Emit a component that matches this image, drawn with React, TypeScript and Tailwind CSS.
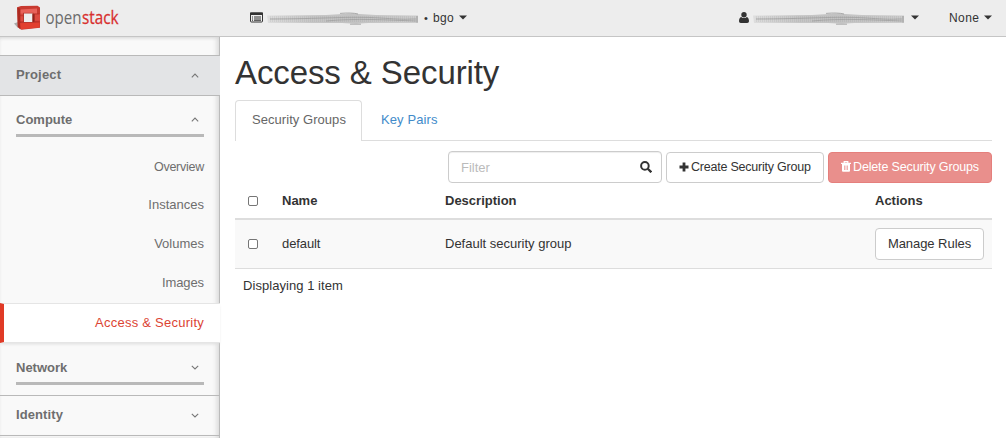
import React from "react";

function Caret({ className = "" }: { className?: string }) {
  return (
    <svg width="8" height="5" viewBox="0 0 8 5" className={className} fill="#333">
      <path d="M0 .4h8L4 4.6z" />
    </svg>
  );
}

function Chevron({ up = false }: { up?: boolean }) {
  return (
    <svg width="8" height="5" viewBox="0 0 8 5" fill="none" stroke="#777" strokeWidth="1.1">
      <path d={up ? "M.8 4.3 4 1.1l3.2 3.2" : "M.8.8 4 4 7.2.8"} />
    </svg>
  );
}

function Logo() {
  return (
    <svg width="112" height="33" viewBox="0 0 112 33">
      <path d="M0 23.500l4-1.500v6z" fill="#999" opacity=".8" />
      <path d="M3.200 7.200 7 6l16.500-.200L26 7.500v20.300L7.500 29.800 3.800 27z" fill="#c83a30" />
      <path d="M3.200 7.200 6.500 9v20.500L3.800 27z" fill="#ad2a20" />
      <path d="M6.500 9.500 23 8.500v5.300H6.500z" fill="#e8625a" />
      <path d="M6.500 14.200H9v7.300H6.500zM21 14h5v6.800h-5z" fill="#dc4a40" />
      <path d="M6 23.300 25.500 22v5.500L7 29.300z" fill="#e2402f" />
      <path d="M9 12.800h10.500v10H9z" fill="#b5382f" />
      <path d="M10 13.500h8.500v8.500H10z" fill="#eeeeee" />
      <path d="M18.500 14h1.900v8h-1.900z" fill="#8c241c" />
      <path d="M4 15.600l5.500.200M4 22.200l5.500-.200M19 14h6.500M19 22h6.500" stroke="#b02c22" strokeWidth=".7" />
      <text x="31.5" y="23.5" fontFamily="Open Sans, sans-serif" fontSize="19" textLength="36" lengthAdjust="spacingAndGlyphs" fill="#6c6c6c">open</text>
      <text x="68" y="23.5" fontFamily="Open Sans, sans-serif" fontSize="19" textLength="36.5" lengthAdjust="spacingAndGlyphs" fill="#d8302f" stroke="#d8302f" strokeWidth=".3">stack</text>
    </svg>
  );
}

function Smear({ id }: { id: string }) {
  return (
    <svg width="155" height="16" viewBox="0 0 155 16">
      <defs>
        <linearGradient id={id} x1="0" x2="1">
          <stop offset="0" stopColor="#dedede" />
          <stop offset=".3" stopColor="#c6c6c6" />
          <stop offset=".55" stopColor="#c2c2c2" />
          <stop offset="1" stopColor="#cdcdcd" />
        </linearGradient>
        <pattern id={id + "p"} width="2" height="8" patternUnits="userSpaceOnUse">
          <path d="M0 0h1v8H0z" fill="#888" opacity=".14" />
        </pattern>
        <filter id={id + "b"} x="-5%" y="-30%" width="110%" height="160%">
          <feGaussianBlur stdDeviation=".7" />
        </filter>
      </defs>
      <g filter={`url(#${id}b)`}>
        <path d="M1 5.500 60 5 85 3.500l25 1.500 42 .5V13H102l-12 .8-14-.8H2z" fill={`url(#${id})`} />
        <path d="M4 9c50 0 80-3 110-1s25 1 36 1M60 11c30-3 60-1 90 0" stroke="#aaa" strokeWidth="1" fill="none" />
        <path d="M74 3.400q12-1 18 .6M84 14.200h11" stroke="#999" strokeWidth=".8" fill="none" />
        <path d="M151 6v6.500" stroke="#999" strokeWidth="1" />
      </g>
      <path d="M3 6h146v6H3z" fill={`url(#${id}p)`} />
    </svg>
  );
}

function Header() {
  return (
    <header className="flex h-[37px] shrink-0 border-b border-[#c5c5c5] bg-[#ededed] text-[12px] leading-[35px]">
      <div className="w-[250px] pl-[14px]">
        <Logo />
      </div>
      <div className="flex h-[35px] w-[489px] items-center">
        <svg width="13" height="11" viewBox="0 0 13 10" className="shrink-0">
          <rect x=".5" y=".5" width="12" height="9" rx=".8" fill="#eee" stroke="#333" />
          <path d="M0 0h13v2.5H0z" fill="#333" />
          <path d="M2 4h1v1H2zm2 0h7v1H4zM2 6h1v.9H2zm2 0h7v.9H4zM2 7.8h1v.7H2zm2 0h7v.7H4z" fill="#333" />
        </svg>
        <span className="ml-[3px] flex w-[155px]"><Smear id="sa" /></span>
        <span className="ml-[3px] w-[6px] pt-[2px] text-[11px]">•</span>
        <span className="ml-[3px] w-[22px] pt-[2px] tracking-[.3px]">bgo</span>
        <Caret className="ml-[4px]" />
      </div>
      <div className="flex h-[35px] flex-1 items-center">
        <svg width="10" height="11" viewBox="0 0 10 11" fill="#333">
          <circle cx="5" cy="2.8" r="2.7" />
          <path d="M2.2 4.9C.7 5.2 0 7 0 9c0 1.3.6 2 1.8 2h6.4C9.400 11 10 10.300 10 9c0-2-.7-3.800-2.200-4.100Q5 7.300 2.200 4.900z" />
        </svg>
        <span className="ml-[3px] flex w-[155px]"><Smear id="sb" /></span>
        <Caret className="ml-[4px]" />
        <span className="ml-[30px] w-[32px] pt-[2px] tracking-[.4px]">None</span>
        <Caret className="ml-[3px]" />
      </div>
    </header>
  );
}

function Sidebar() {
  return (
    <nav className="w-[220px] shrink-0 bg-[#f9f9f9] text-[13px] text-[#6e6e6e] shadow-[inset_-1px_0_0_#bbb,inset_-4px_0_5px_-1px_#d8d8d8,inset_0_2px_4px_-2px_#ccc]">
      <div className="mt-[18px] flex h-[41px] items-center justify-between border-y border-[#b9b9b9] bg-[#e3e4e6] pl-4 pr-[21px] font-bold">
        <span className="pb-[2px] tracking-[.15px]">Project</span>
        <Chevron up />
      </div>
      <div className="mx-4 mt-[8px] flex h-[33px] items-center justify-between border-b-[3px] border-[#b9b9b9] pr-[5px] pt-px font-bold">
        <span className="pt-px">Compute</span>
        <Chevron up />
      </div>
      <div className="pr-4 pt-[11px] text-right">
        <div className="h-[38px] text-[12.5px] leading-[38px] tracking-[-.25px]">Overview</div>
        <div className="h-[39px] leading-[38px]">Instances</div>
        <div className="h-[39px] leading-[38px]">Volumes</div>
        <div className="h-[39px] leading-[38px] tracking-[-.1px]">Images</div>
      </div>
      <div className="h-[40px] border-y border-l-4 border-y-[#e5e5e5] border-l-[#e03a26] bg-white pr-4 text-right leading-[38px] tracking-[.25px] text-[#dc4433] shadow-[0_2px_3px_-1px_#ddd]">
        Access &amp; Security
      </div>
      <div className="mx-4 mt-[9px] flex h-[33px] items-center justify-between border-b-[3px] border-[#b9b9b9] pr-[5px] pt-px font-bold">
        <span className="pt-px">Network</span>
        <Chevron />
      </div>
      <div className="mt-[10px] flex h-[41px] items-center justify-between border-y border-[#b9b9b9] pl-4 pr-[21px] font-bold">
        <span className="pb-[2px] tracking-[.1px]">Identity</span>
        <Chevron />
      </div>
    </nav>
  );
}

function Checkbox() {
  return <input type="checkbox" className="block h-[10px] w-[10px] appearance-none rounded-[2px] border border-[#767676] bg-white" />;
}

const columns = "grid grid-cols-[47px_163px_430px_117px] items-center";

export default function App() {
  return (
    <div className="flex h-[438px] w-[1006px] flex-col overflow-hidden bg-white font-['Liberation_Sans',Arial,sans-serif] text-[13px] text-[#333]">
      <Header />
      <div className="flex min-h-0 flex-1">
        <Sidebar />
        <main className="w-[772px] pl-[15px]">
          <h1 className="mt-[16px] h-[47px] text-[33px] leading-[40px] tracking-[-.1px]">Access &amp; Security</h1>
          <div className="flex h-[41px] border-b border-[#ddd] leading-[38px]">
            <div className="h-[41px] w-[127px] rounded-t-[4px] border border-b-0 border-[#ddd] bg-white pl-4 tracking-[.05px] text-[#666]">Security Groups</div>
            <div className="pl-[19px] pt-px tracking-[.1px] text-[#428bca]">Key Pairs</div>
          </div>
          <div className="flex items-end justify-end gap-[4px] pt-[10px] text-[12px]">
            <div className="flex h-[32px] w-[214px] items-center justify-between rounded-[4px] border border-[#ccc] pl-3 pr-[9px] text-[13px] text-[#bbb] shadow-[inset_0_1px_1px_#eee]">
              <span className="pt-px">Filter</span>
              <svg width="12" height="12" viewBox="0 0 12 12" fill="none" stroke="#333" strokeWidth="2">
                <circle cx="4.900" cy="4.900" r="3.800" />
                <path d="M7.800 7.800 11.300 11.300" strokeWidth="2.300" />
              </svg>
            </div>
            <button className="flex h-[31px] w-[158px] items-center rounded-[4px] border border-[#ccc] pb-px pl-3">
              <svg width="10" height="10" viewBox="0 0 10 10" fill="#333" className="mb-px"><path d="M3.600 .500h2.800v3.100h3.100v2.800H6.400v3.100H3.600V6.400H.500V3.600h3.100z" /></svg>
              <span className="ml-[2px] whitespace-nowrap text-[12.5px] leading-[18px] tracking-[-.22px]">Create Security Group</span>
            </button>
            <button className="flex h-[31px] w-[164px] items-center rounded-[4px] border border-[#e57f7c] bg-[#e98f8c] pb-px pl-3 text-white">
              <svg width="10" height="11" viewBox="0 0 10 11" fill="none" stroke="#fff" className="mb-px">
                <path d="M3.200 2V.700h3.600V2M0 2.300h10" strokeWidth="1.200" />
                <path d="M1.500 3v7.200h7V3" fill="#fff" />
                <path d="M3.500 4.500v4.500M5 4.500v4.500M6.500 4.500v4.500" stroke="#e98f8c" strokeWidth=".700" />
              </svg>
              <span className="ml-[2px] whitespace-nowrap text-[12.5px] leading-[18px] tracking-[-.15px]">Delete Security Groups</span>
            </button>
          </div>
          <div className={`${columns} h-[37px] border-b-2 border-[#ddd] font-bold`}>
            <span className="pl-[13px]"><Checkbox /></span>
            <span>Name</span>
            <span>Description</span>
            <span>Actions</span>
          </div>
          <div className={`${columns} h-[49px] border-b border-[#ddd] bg-[#f9f9f9]`}>
            <span className="pl-[13px]"><Checkbox /></span>
            <span className="tracking-[-.1px]">default</span>
            <span>Default security group</span>
            <button className="h-[32px] w-[109px] rounded-[4px] border border-[#ccc] bg-white tracking-[-.05px]">Manage Rules</button>
          </div>
          <div className="pl-2 leading-[34px] tracking-[.05px]">Displaying 1 item</div>
        </main>
      </div>
    </div>
  );
}
